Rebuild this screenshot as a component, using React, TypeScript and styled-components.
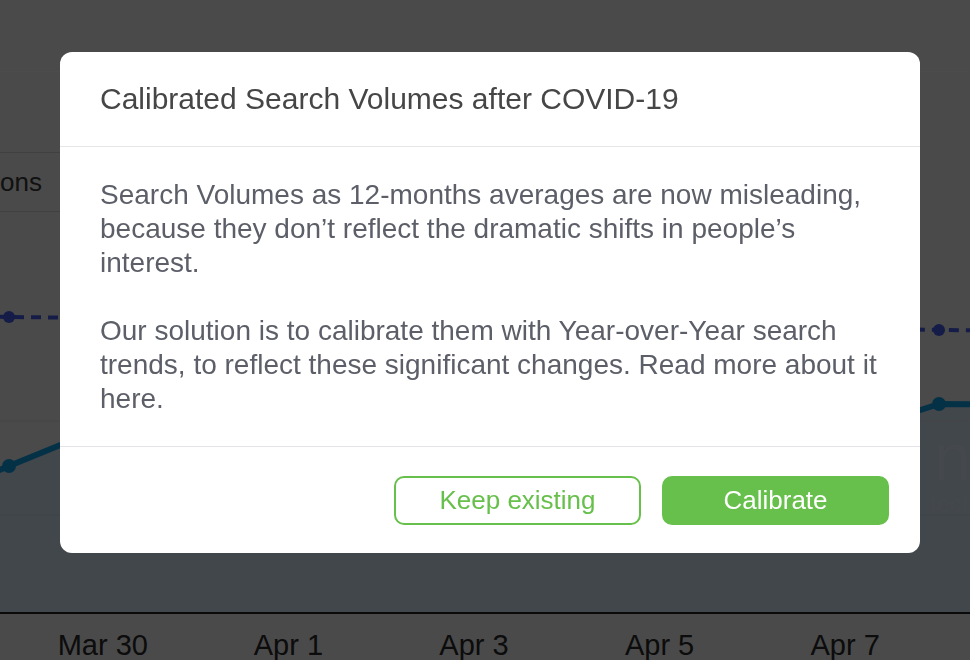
import React from "react";
import styled, { createGlobalStyle } from "styled-components";

const GlobalStyle = createGlobalStyle`
  html, body {
    margin: 0;
    padding: 0;
    width: 100%;
    height: 100%;
    overflow: hidden;
  }
  body {
    font-family: "Liberation Sans", Arial, Helvetica, sans-serif;
  }
  * {
    box-sizing: border-box;
  }
`;

const GREEN = "#67c04b";

const Page = styled.div`
  width: 100%;
  height: 100vh;
  background: #f7f7f7;
  overflow: hidden;
`;

const TopBar = styled.div`
  height: 72px;
  border-bottom: 1px solid #ffffff;
`;

const TabRow = styled.div`
  display: flex;
  margin-top: 80px;
`;

const Tab = styled.div`
  display: flex;
  align-items: center;
  width: 220px;
  height: 60px;
  border: 1px solid #d6d6d6;
  border-left: none;
  font-size: 26px;
  color: #3a3a3a;
`;

const Axis = styled.div`
  display: grid;
  grid-template-columns: repeat(5, 185.6px);
  padding: 14px 0 0 10px;
  border-top: 2px solid #222222;
`;

const AxisLabel = styled.div`
  text-align: center;
  font-size: 29px;
  line-height: 34px;
  color: #2a2a2a;
`;

const Overlay = styled.div`
  position: fixed;
  inset: 0;
  display: flex;
  justify-content: center;
  align-items: flex-start;
  padding: 52px 0 0 10px;
  background: rgba(0, 0, 0, 0.7);
`;

const Modal = styled.div`
  width: 860px;
  background: #ffffff;
  border-radius: 12px;
  overflow: hidden;
`;

const Header = styled.div`
  display: flex;
  align-items: center;
  height: 95px;
  padding: 0 40px;
  border-bottom: 1px solid #e6e6e6;
`;

const Title = styled.h2`
  margin: 0;
  font-size: 30px;
  font-weight: 400;
  color: #464646;
`;

const Body = styled.div`
  padding: 31px 34px 30px 40px;
  border-bottom: 1px solid #e2e2e8;
`;

const Paragraph = styled.p`
  margin: 0;
  font-size: 28px;
  line-height: 34px;
  color: #5c5e68;
  & + & {
    margin-top: 34px;
  }
`;

const Footer = styled.div`
  display: flex;
  justify-content: flex-end;
  gap: 21px;
  padding: 29px 31px 28px;
`;

const Button = styled.button<{ primary?: boolean; w: number }>`
  width: ${(p) => p.w}px;
  height: 49px;
  border: 2px solid ${GREEN};
  border-radius: 10px;
  background: ${(p) => (p.primary ? GREEN : "#ffffff")};
  color: ${(p) => (p.primary ? "#ffffff" : GREEN)};
  font-family: inherit;
  font-size: 26px;
  cursor: pointer;
`;

const xs = Array.from({ length: 12 }, (_, i) => 9 + 93 * i);
const dashed = [105, 106, 107, 108, 109, 111, 112, 114, 115, 116, 118, 119];
const solid = [254, 216, 196, 184, 178, 172, 190, 200, 210, 222, 192, 193];

const pts = (ys: number[]) => ys.map((y, i) => `${xs[i]},${y}`).join(" ");

function LineChart() {
  return (
    <svg width="970" height="400" viewBox="0 0 970 400" style={{ display: "block" }}>
      <polygon points={`${pts(solid)} ${xs[11]},400 ${xs[0] - 20},400 ${xs[0] - 20},262`} fill="#dcedfd" />
      <line x1="0" x2="970" y1="209" y2="209" stroke="#e4e4e4" strokeWidth="1" />
      <line x1="0" x2="970" y1="303" y2="303" stroke="#d0e0f0" strokeWidth="1" />
      <g fill="#ffffff" fillOpacity="0.3" fontFamily="Liberation Sans, Arial, sans-serif" fontWeight="300">
        <text x="934" y="268" fontSize="66">nline</text>
        <text x="930" y="300" fontSize="24">technology</text>
      </g>
      <polyline points={`-20,104 ${pts(dashed)}`} fill="none" stroke="#4560ee" strokeWidth="4" strokeDasharray="10 7" />
      {xs.map((x, i) => (
        <circle key={"d" + i} cx={x} cy={dashed[i]} r="6" fill="#4560ee" />
      ))}
      <polyline points={`-20,266 ${pts(solid)}`} fill="none" stroke="#12a6ec" strokeWidth="6" strokeLinejoin="round" />
      {xs.map((x, i) => (
        <circle key={"s" + i} cx={x} cy={solid[i]} r="7" fill="#12a6ec" />
      ))}
    </svg>
  );
}

export default function App() {
  return (
    <>
      <GlobalStyle />
      <Page>
        <TopBar />
        <TabRow>
          <Tab>ons</Tab>
        </TabRow>
        <LineChart />
        <Axis>
          {["Mar 30", "Apr 1", "Apr 3", "Apr 5", "Apr 7"].map((d) => (
            <AxisLabel key={d}>{d}</AxisLabel>
          ))}
        </Axis>
      </Page>
      <Overlay>
        <Modal>
          <Header>
            <Title>Calibrated Search Volumes after COVID-19</Title>
          </Header>
          <Body>
            <Paragraph>
              Search Volumes as 12-months averages are now misleading, because they don’t reflect
              the dramatic shifts in people’s interest.
            </Paragraph>
            <Paragraph>
              Our solution is to calibrate them with Year-over-Year search trends, to reflect these
              significant changes. Read more about it here.
            </Paragraph>
          </Body>
          <Footer>
            <Button w={247}>Keep existing</Button>
            <Button w={227} primary>
              Calibrate
            </Button>
          </Footer>
        </Modal>
      </Overlay>
    </>
  );
}
